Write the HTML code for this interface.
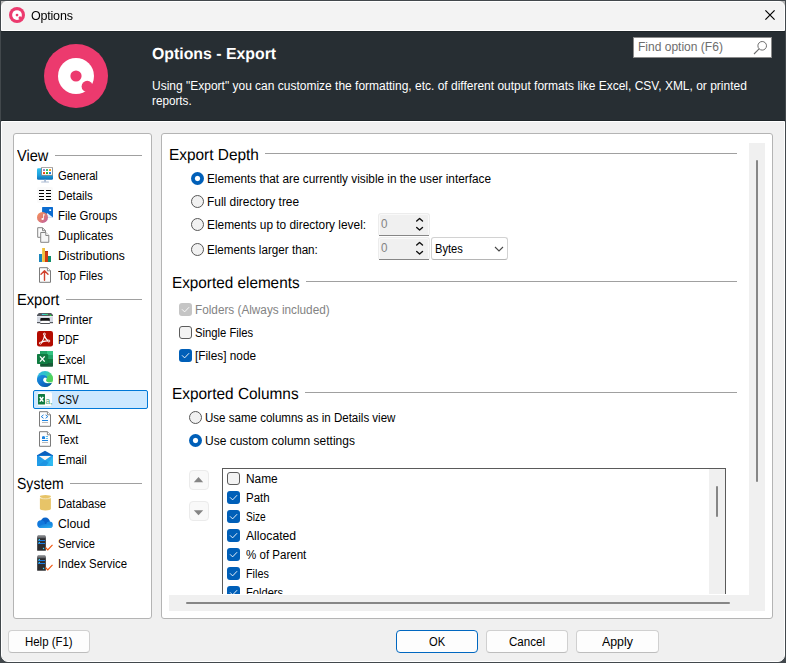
<!DOCTYPE html>
<html lang="en">
<head>
<meta charset="utf-8">
<title>Options</title>
<style>
*{box-sizing:border-box;margin:0;padding:0}
html,body{width:786px;height:663px;overflow:hidden;background:#42484c}
body{font-family:"Liberation Sans",sans-serif;font-size:12px;color:#000;position:relative}
.abs,.t,.h,.hb,.ln,.ic,.rad,.cb,.btn,.spin,.track,.thumb,.panel,.arr{position:absolute}
.crn{position:absolute;top:1px;width:6px;height:6px;background:#b4b4b4}
#titlebar{position:absolute;left:1px;top:1px;width:784px;height:30px;background:#f3f3f3;border:1px solid #fff;border-radius:6px 6px 0 0}
#header{position:absolute;left:1px;top:31px;width:784px;height:90px;background:#272e33;box-shadow:inset 0 1px 0 0 #1e2529,inset 0 -1px 0 0 #1e2529}
#main{position:absolute;left:1px;top:121px;width:784px;height:541px;background:#f0f0f0;border:1px solid #fff;border-radius:0 0 7px 7px}
.panel{background:#fff;border:1px solid #b4b4b4;border-radius:3px}
.t{white-space:pre;line-height:16px;height:16px;font-size:12.5px;transform-origin:0 0}
.h{white-space:pre;line-height:20px;height:20px;font-size:16px;transform-origin:0 0;text-rendering:geometricPrecision}
.hb{white-space:pre;line-height:22px;height:22px;font-size:16px;font-weight:bold;color:#fff;transform-origin:0 0;text-rendering:geometricPrecision}
.w{color:#fff}
.g{color:#838383}
.f{color:#6d6d6d}
.ln{height:1px;background:#a0a0a0}
.rad{width:13px;height:13px;border-radius:50%;border:1px solid #575757;background:#f1f1f1}
.rad.on{border:none;background:radial-gradient(circle at 50% 50%,#fff 0,#fff 2.1px,#005fb8 3.1px)}
.cb{width:13px;height:13px;border-radius:3px;border:1px solid #5c5c5c;background:#f3f3f3}
.cb.on{border:none;background:#005fb8}
.cb.dis{border:none;background:#c5c5c5}
.cb svg{position:absolute;left:0;top:0}
.btn{height:23px;width:82px;border:1px solid #d0d0d0;border-bottom-color:#bdbdbd;border-radius:4px;background:#fdfdfd}
.spin{width:52px;height:23px;background:#f0f0f0;border:1px solid #ececec;border-bottom:none;border-radius:3px;box-shadow:inset 0 1px 0 0 #f9f9f9,inset 1px 0 0 0 #f9f9f9,inset -1px 0 0 0 #f9f9f9}
.spin:after{content:"";position:absolute;left:0;right:0;bottom:0;height:1px;background:#868686}
.track{background:#f0f0f0}
.thumb{background:#868686;border-radius:1px}
.arr{width:20px;height:20px;background:#f9f9f9;border:1px solid #ebebeb;border-radius:4px}
</style>
</head>
<body>
<div class="crn" style="left:1px"></div><div class="crn" style="left:779px"></div>
<div id="titlebar"></div><div id="header"></div><div id="main"></div>
<!-- title bar -->
<svg class="ic" style="left:9px;top:7px" width="16" height="16" viewBox="0 0 64 64"><circle cx="32" cy="32" r="32" fill="#ec3a6e"/><circle cx="32" cy="32" r="19.5" fill="#fff"/><circle cx="32" cy="32" r="5.5" fill="#ec3a6e"/><circle cx="44" cy="43" r="6" fill="#ec3a6e"/><path d="M43 42L54 45L47 54Z" fill="#ec3a6e"/></svg>
<div class="t" style="left:31px;top:8px;font-size:12.5px;letter-spacing:-0.2px;color:#000;will-change:opacity">Options</div>
<svg class="ic" style="left:765px;top:10px" width="10" height="10" viewBox="0 0 10 10"><path d="M.4 .4L9.6 9.6M9.6 .4L.4 9.6" stroke="#000" stroke-width="1.2" fill="none"/></svg>
<!-- header -->
<svg class="ic" style="left:44px;top:44px" width="64" height="64" viewBox="0 0 64 64"><circle cx="32" cy="32" r="32" fill="#ec3a6e"/><circle cx="32" cy="32" r="18" fill="#fff"/><circle cx="32" cy="32" r="5.6" fill="#ec3a6e"/><circle cx="43.2" cy="42.4" r="5.6" fill="#ec3a6e"/><path d="M43 42 L52 44 L46 52 Z" fill="#ec3a6e"/></svg>
<div class="hb" style="left:152px;top:44px;transform:scaleX(0.99)">Options - Export</div>
<div class="t w" style="left:152px;top:78px;transform:scaleX(0.959)">Using "Export" you can customize the formatting, etc. of different output formats like Excel, CSV, XML, or printed</div>
<div class="t w" style="left:152px;top:93px;transform:scaleX(0.937)">reports.</div>
<div class="abs" style="left:633px;top:37px;width:139px;height:21px;background:#fff;border:1px solid #8a8a8a"></div>
<div class="t f" style="left:638px;top:39px;transform:scaleX(0.962)">Find option (F6)</div>
<svg class="ic" style="left:753px;top:40px" width="15" height="15" viewBox="0 0 15 15"><circle cx="9.2" cy="5.8" r="4.3" fill="none" stroke="#6d6d6d" stroke-width="1"/><path d="M6.1 8.9L1 14" stroke="#6d6d6d" stroke-width="1.1" fill="none"/></svg>
<!-- panels -->
<div class="panel" style="left:13px;top:133px;width:139px;height:486px"></div>
<div class="panel" style="left:161px;top:133px;width:612px;height:486px"></div>
<!-- tree -->
<div class="h" style="left:17px;top:147px;transform:scaleX(0.91)">View</div>
<div class="ln" style="left:55px;top:155px;width:87px"></div>
<svg class="ic" style="left:37px;top:167px" width="16" height="16" viewBox="0 0 16 16"><defs><linearGradient id="gm" x1="0" y1="0" x2="0" y2="1"><stop offset="0" stop-color="#30c2f0"/><stop offset=".6" stop-color="#1ea0dc"/><stop offset="1" stop-color="#0d6fb8"/></linearGradient></defs>
<rect x="0" y="1.2" width="16" height="11.6" rx="1.3" fill="url(#gm)"/>
<rect x="7.1" y="12.8" width="1.9" height="2" fill="#a9b9d2"/><rect x="4.1" y="14.5" width="7.9" height="1" rx=".5" fill="#a9b9d2"/>
<rect x="4.5" y=".3" width="11.1" height="8" rx=".5" fill="#fff" stroke="#7d7877" stroke-width=".8"/>
<rect x="6" y="2.1" width="2" height="1.9" fill="#8f7fc9"/><rect x="9" y="2.1" width="2" height="1.9" fill="#2dc07b"/><rect x="12" y="2.1" width="2" height="1.9" fill="#f7930f"/>
<rect x="6" y="5.1" width="2" height="1.9" fill="#f2480b"/><rect x="9" y="5.1" width="2" height="1.9" fill="#2bae23"/><rect x="12" y="5.1" width="2" height="1.9" fill="#0f79e2"/></svg>
<div class="t" style="left:58px;top:168px;transform:scaleX(0.896)">General</div>
<svg class="ic" style="left:37px;top:187px" width="16" height="16" viewBox="0 0 16 16"><rect x="0" y="0" width="16" height="16" rx="2" fill="#fafafa"/>
<path d="M2 3.5h5M9 3.5h5M2 6.5h5M9 6.5h5M2 9.5h5M9 9.5h5M2 12.5h5M9 12.5h5" stroke="#000" stroke-width="1" fill="none"/></svg>
<div class="t" style="left:58px;top:188px;transform:scaleX(0.911)">Details</div>
<svg class="ic" style="left:37px;top:207px" width="16" height="16" viewBox="0 0 16 16"><defs><linearGradient id="gf" x1="0" y1="0" x2="1" y2="1"><stop offset="0" stop-color="#f6935a"/><stop offset=".5" stop-color="#e07c72"/><stop offset="1" stop-color="#b85aa8"/></linearGradient></defs>
<path d="M5.1 .9a1 1 0 0 1 1-1h8.9a1 1 0 0 1 1 1v9.5h-10.9z" fill="#0b6cd0"/>
<path d="M10.3 5.9l5.7 4.5v.3h-8.5z" fill="#eaf3fc"/>
<rect x="12.3" y="2.3" width="1.8" height="1.7" fill="#fff"/>
<circle cx="5.5" cy="10.4" r="5.5" fill="url(#gf)"/>
<path d="M6.5 7.3v4.5M6.5 7.3l1.5 .9" stroke="#fff" stroke-width=".8" fill="none"/><ellipse cx="5.6" cy="12" rx="1.2" ry=".9" fill="#fff"/></svg>
<div class="t" style="left:58px;top:208px;transform:scaleX(0.915)">File Groups</div>
<svg class="ic" style="left:37px;top:227px" width="16" height="16" viewBox="0 0 16 16"><path d="M.7 .7h4.8l3 3v6.6h-7.8z" fill="#fbfbfb" stroke="#858585" stroke-width="1"/><path d="M5.5 .7v3h3" fill="none" stroke="#858585" stroke-width="1"/>
<path d="M3.7 5.5h5.1l3 3v6.8h-8.1z" fill="#f6f6f6" stroke="#858585" stroke-width="1"/><path d="M8.8 5.5v3h3" fill="#fff" stroke="#858585" stroke-width="1"/></svg>
<div class="t" style="left:58px;top:228px;transform:scaleX(0.947)">Duplicates</div>
<svg class="ic" style="left:37px;top:247px" width="16" height="16" viewBox="0 0 16 16"><rect x="2" y="7" width="3" height="8" fill="#1a86bd"/><rect x="5" y="1" width="3" height="14" fill="#efbf3f"/><rect x="8" y="4" width="3" height="11" fill="#cf3a12"/><rect x="11" y="9" width="3" height="6" fill="#0f8f6b"/>
<rect x="5" y="1" width="1" height="14" fill="#f5d060" opacity=".7"/><rect x="8" y="4" width="3" height="1" fill="#a82e10"/></svg>
<div class="t" style="left:58px;top:248px;transform:scaleX(0.972)">Distributions</div>
<svg class="ic" style="left:37px;top:267px" width="16" height="16" viewBox="0 0 16 16"><path d="M2.5 .7h7.9l3.1 3.1v11.5h-11z" fill="#fdfdfd" stroke="#7b7b7b" stroke-width="1"/><path d="M10.4 .7v3.1h3.1" fill="#fff" stroke="#7b7b7b" stroke-width=".9"/><path d="M7.5 13.2v-9M4 7.3l3.5-3.5l3.5 3.5" stroke="#d0402c" stroke-width="1.4" fill="none" stroke-linecap="round" stroke-linejoin="round"/></svg>
<div class="t" style="left:58px;top:268px;transform:scaleX(0.899)">Top Files</div>
<div class="h" style="left:17px;top:291px;transform:scaleX(0.916)">Export</div>
<div class="ln" style="left:66px;top:299px;width:76px"></div>
<svg class="ic" style="left:37px;top:308px" width="16" height="16" viewBox="0 0 16 16"><defs><linearGradient id="gp" x1="0" y1="0" x2="1" y2="0"><stop offset="0" stop-color="#45c3f5"/><stop offset=".5" stop-color="#36d3b0"/><stop offset="1" stop-color="#3fd75f"/></linearGradient></defs>
<path d="M1.9 4.9h12.2l1.9 2v1.2h-16v-1.2z" fill="#54575e"/>
<rect x="4.9" y="5.9" width="6.1" height="1.1" fill="url(#gp)"/><rect x="12.7" y="6.8" width="1.6" height="1.5" fill="#1fe83a"/>
<rect x="0" y="7.9" width="16" height="7.2" rx=".4" fill="#d5dae3"/>
<rect x="0" y="8" width="16" height=".8" fill="#e9edf3"/>
<rect x="3.3" y="9.9" width="9.5" height="3.4" rx="1" fill="#121315"/>
<path d="M4.4 12.8h7.4l.9 2.5h-9.2z" fill="#fff"/>
<rect x="0" y="14.1" width="3.1" height="1.1" fill="#4b4e54"/><rect x="12.9" y="14.1" width="3.1" height="1.1" fill="#4b4e54"/>
<rect x="3.2" y="15.1" width="9.7" height=".9" fill="#3c3f44"/></svg>
<div class="t" style="left:58px;top:312px;transform:scaleX(0.936)">Printer</div>
<svg class="ic" style="left:37px;top:331px" width="16" height="16" viewBox="0 0 16 16"><rect x="0" y="0" width="16" height="15.4" rx="2.2" fill="#b30b00"/>
<g fill="none" stroke="#fff" stroke-width="1.1" stroke-linecap="round" stroke-linejoin="round"><path d="M7.4 3.1c.3 3.2-1.4 6.6-3.9 9M7.4 3.1c.2 3 1.8 5.6 4.3 6.9M3.5 12.1c2.4-1.8 5.4-2.5 8.2-2.1"/></g>
<circle cx="7.4" cy="3.1" r="1" fill="#b30b00" stroke="#fff" stroke-width=".9"/><circle cx="3.4" cy="12.2" r="1" fill="#b30b00" stroke="#fff" stroke-width=".9"/><circle cx="11.8" cy="10" r="1" fill="#b30b00" stroke="#fff" stroke-width=".9"/></svg>
<div class="t" style="left:58px;top:332px;transform:scaleX(0.835)">PDF</div>
<svg class="ic" style="left:37px;top:351px" width="16" height="16" viewBox="0 0 16 16"><rect x="3.1" y="0" width="12.9" height="15.8" rx=".8" fill="#185c37"/>
<rect x="3.1" y="0" width="6.8" height="4" fill="#21a366"/><rect x="9.9" y="0" width="6.1" height="4" fill="#33c481"/>
<rect x="3.1" y="4" width="6.8" height="4" fill="#107c41"/><rect x="9.9" y="4" width="6.1" height="4" fill="#21a366"/>
<rect x="3.1" y="8" width="6.8" height="4" fill="#0e6a38"/><rect x="9.9" y="8" width="6.1" height="4" fill="#107c41"/>
<rect x="4.2" y="3.6" width="7" height="10.6" fill="#0a4a2a" opacity=".45"/>
<rect x="0" y="3" width="10.9" height="10" rx=".7" fill="#107c41"/>
<path d="M3 5.4l4.7 5.2M7.7 5.4l-4.7 5.2" stroke="#fff" stroke-width="1.4" fill="none"/></svg>
<div class="t" style="left:58px;top:352px;transform:scaleX(0.887)">Excel</div>
<svg class="ic" style="left:37px;top:371px" width="16" height="16" viewBox="0 0 16 16"><defs><linearGradient id="ge1" x1="0" y1="0" x2="1" y2=".35"><stop offset="0" stop-color="#2fb0ea"/><stop offset=".55" stop-color="#2ec6c4"/><stop offset="1" stop-color="#5cda58"/></linearGradient>
<linearGradient id="ge2" x1="0" y1="0" x2="1" y2="1"><stop offset="0" stop-color="#1d95e4"/><stop offset=".55" stop-color="#0f6cc8"/><stop offset="1" stop-color="#0b479c"/></linearGradient></defs>
<circle cx="8" cy="8" r="8" fill="url(#ge1)"/>
<path d="M0 8.5C.2 5.6 3 3.9 5.8 3.9C8.6 3.9 10.3 5.4 10.6 7.3C9.6 6.5 8.2 6.3 7.2 6.9C5.9 7.7 5.8 9.5 6.8 10.8C8.2 12.6 11.5 12.9 14.9 11.7C13.9 14.2 11.2 16 8 16C3.6 16 0 12.4 0 8.5Z" fill="url(#ge2)"/>
<path d="M7.2 6.9C6 7.7 5.9 9.4 6.9 10.6C8.3 12.3 11.5 12.5 14.9 11.5C15.1 11.2 15.2 10.9 15.3 10.6C13.2 11.5 10.6 11.3 9.6 10.2C9 9.4 9.2 8.5 9.9 7.9C9.3 7 8.2 6.3 7.2 6.9Z" fill="#fff"/>
<path d="M9.9 7.9C9.2 8.5 9 9.4 9.6 10.2C10.6 11.3 13.2 11.5 15.3 10.6C15.8 9.6 16 8.9 16 8C16 6.6 15.6 5.4 15 4.4C13 3.9 11.2 4.6 10 5.8C10.6 6.5 10.5 7.3 9.9 7.9Z" fill="#4fd25e"/></svg>
<div class="t" style="left:58px;top:372px;transform:scaleX(0.915)">HTML</div>
<div class="abs" style="left:33px;top:390px;width:115px;height:19px;background:#cce8ff;border:1px solid #0078d7;border-radius:2px"></div>
<svg class="ic" style="left:37px;top:391px" width="16" height="16" viewBox="0 0 16 16"><rect x=".8" y="1.2" width="14.2" height="13.9" rx="1.5" fill="#fdfdfd"/>
<rect x="1" y="3" width="7" height="10.6" rx=".5" fill="#107c41"/>
<path d="M2.8 6l3.5 4.6M6.3 6l-3.5 4.6" stroke="#fff" stroke-width="1.5" fill="none"/>
<text x="8.6" y="13.3" font-family="Liberation Sans, sans-serif" font-size="8.5" fill="#4fa878">a,</text></svg>
<div class="t" style="left:58px;top:392px;transform:scaleX(0.808)">CSV</div>
<svg class="ic" style="left:37px;top:411px" width="16" height="16" viewBox="0 0 16 16"><path d="M2.5 .7h7.9l3.1 3.1v11.5h-11z" fill="#fdfdfd" stroke="#7b7b7b" stroke-width="1"/><path d="M10.4 .7v3.1h3.1" fill="#fff" stroke="#7b7b7b" stroke-width=".9"/><path d="M6.5 3.9l-2.2 1.7l2.2 1.7M8.6 3.9l2.2 1.7l-2.2 1.7" stroke="#1d83e0" stroke-width="1" fill="none"/>
<rect x="5" y="9" width="6" height="1" fill="#1d83e0"/><rect x="5" y="11.2" width="6" height=".8" fill="#a8a8a8"/></svg>
<div class="t" style="left:58px;top:412px;transform:scaleX(0.915)">XML</div>
<svg class="ic" style="left:37px;top:431px" width="16" height="16" viewBox="0 0 16 16"><path d="M2.5 .7h7.9l3.1 3.1v11.5h-11z" fill="#fdfdfd" stroke="#7b7b7b" stroke-width="1"/><path d="M10.4 .7v3.1h3.1" fill="#fff" stroke="#7b7b7b" stroke-width=".9"/><rect x="5" y="5.5" width="3" height="2.5" fill="#1d83e0"/><path d="M5 6.5l1.5-1.5l1.5 1.5z" fill="#1d83e0"/><rect x="8.8" y="5" width="2.2" height=".8" fill="#39b4f0"/><rect x="8.8" y="7" width="2.2" height=".8" fill="#39b4f0"/>
<rect x="5" y="9" width="6" height="1" fill="#1d83e0"/><rect x="5" y="11.2" width="6" height=".8" fill="#a8a8a8"/></svg>
<div class="t" style="left:58px;top:432px;transform:scaleX(0.885)">Text</div>
<svg class="ic" style="left:37px;top:450px" width="16" height="16" viewBox="0 0 16 16"><defs><linearGradient id="gem" x1="0" y1="0" x2="1" y2="1"><stop offset="0" stop-color="#1b8ee4"/><stop offset="1" stop-color="#2bb7f0"/></linearGradient></defs>
<path d="M0 5.3l8-4.6l8 4.6v1h-16z" fill="#0a5fbe"/>
<rect x="0" y="5.3" width="16" height="10.7" rx=".6" fill="url(#gem)"/>
<path d="M0 5.3h16v.4h-16z" fill="#0a5fbe"/>
<path d="M2 6h12l-6 4.2z" fill="#fdf6f2"/>
<path d="M0 16l8-5.8l8 5.8z" fill="#1a86dc" opacity=".55"/>
<path d="M16 6.5v9.5h-7z" fill="#3ccaf6" opacity=".5"/></svg>
<div class="t" style="left:58px;top:452px;transform:scaleX(0.919)">Email</div>
<div class="h" style="left:17px;top:475px;transform:scaleX(0.877)">System</div>
<div class="ln" style="left:70px;top:483px;width:72px"></div>
<svg class="ic" style="left:37px;top:495px" width="16" height="16" viewBox="0 0 16 16"><path d="M2.9 3v10.8c0 .9 2.4 1.6 5.5 1.6s5.5-.7 5.5-1.6v-10.8z" fill="#e7c468"/>
<ellipse cx="8.4" cy="1.5" rx="5.5" ry="1.5" fill="#e7c468"/><path d="M2.9 2.7c1 .8 3 1.1 5.5 1.1s4.5-.3 5.5-1.1" fill="none" stroke="#fbf3dc" stroke-width=".7"/></svg>
<div class="t" style="left:58px;top:496px;transform:scaleX(0.898)">Database</div>
<svg class="ic" style="left:37px;top:515px" width="16" height="16" viewBox="0 0 16 16"><defs><linearGradient id="gc" x1="0" y1="0" x2="1" y2="1"><stop offset="0" stop-color="#1279dc"/><stop offset="1" stop-color="#2db0ee"/></linearGradient></defs>
<circle cx="8.3" cy="7.3" r="4.7" fill="#0a63c9"/>
<circle cx="12.5" cy="9.7" r="3.3" fill="#1789e2"/>
<circle cx="4.1" cy="9.1" r="3.9" fill="#1078dc"/>
<path d="M1.5 12c2.5-2.5 6-3.5 9.5-2.8c2 .4 3.8 1.5 4.6 2.3c-.5 .9-1.4 1.5-2.6 1.5h-9c-1 0-1.9-.4-2.5-1z" fill="url(#gc)"/></svg>
<div class="t" style="left:58px;top:516px;transform:scaleX(0.978)">Cloud</div>
<svg class="ic" style="left:37px;top:535px" width="16" height="16" viewBox="0 0 16 16"><path d="M1 .2h7l1 1.3v1.8h-9v-1.8z" fill="#7b7d81"/>
<rect x="0" y="2.6" width="9" height="13.2" rx=".5" fill="#56575a"/>
<rect x=".8" y="3.3" width="7.4" height="12" fill="#2c2c2f"/>
<rect x="1" y="5" width="7" height=".9" fill="#1a86f5"/><rect x="1" y="8" width="7" height=".9" fill="#1a86f5"/>
<rect x="1.7" y="3.9" width="1.2" height="1.2" fill="#49d8f5"/><rect x="1.7" y="6.9" width="1.2" height="1.2" fill="#49d8f5"/>
<rect x="5.9" y="12.8" width="1.3" height="1.3" fill="#49d8f5"/>
<path d="M8.5 12.5l2.3 2.3l4.7-4.9" stroke="#f0560e" stroke-width="1.2" fill="none"/></svg>
<div class="t" style="left:58px;top:536px;transform:scaleX(0.888)">Service</div>
<svg class="ic" style="left:37px;top:555px" width="16" height="16" viewBox="0 0 16 16"><path d="M1 .2h7l1 1.3v1.8h-9v-1.8z" fill="#7b7d81"/>
<rect x="0" y="2.6" width="9" height="13.2" rx=".5" fill="#56575a"/>
<rect x=".8" y="3.3" width="7.4" height="12" fill="#2c2c2f"/>
<rect x="1" y="5" width="7" height=".9" fill="#1a86f5"/><rect x="1" y="8" width="7" height=".9" fill="#1a86f5"/>
<rect x="1.7" y="3.9" width="1.2" height="1.2" fill="#49d8f5"/><rect x="1.7" y="6.9" width="1.2" height="1.2" fill="#49d8f5"/>
<rect x="5.9" y="12.8" width="1.3" height="1.3" fill="#49d8f5"/>
<path d="M8.5 12.5l2.3 2.3l4.7-4.9" stroke="#f0560e" stroke-width="1.2" fill="none"/></svg>
<div class="t" style="left:58px;top:556px;transform:scaleX(0.913)">Index Service</div>
<!-- export depth -->
<div class="h" style="left:169px;top:146px;transform:scaleX(0.963)">Export Depth</div>
<div class="ln" style="left:265px;top:153px;width:472px"></div>
<div class="rad on" style="left:191px;top:172px"></div>
<div class="t" style="left:207px;top:171px;transform:scaleX(0.944)">Elements that are currently visible in the user interface</div>
<div class="rad" style="left:191px;top:195px"></div>
<div class="t" style="left:207px;top:194px;transform:scaleX(0.954)">Full directory tree</div>
<div class="rad" style="left:191px;top:218px"></div>
<div class="t" style="left:207px;top:217px;transform:scaleX(0.95)">Elements up to directory level:</div>
<div class="rad" style="left:191px;top:243px"></div>
<div class="t" style="left:207px;top:242px;transform:scaleX(0.933)">Elements larger than:</div>
<div class="spin" style="left:378px;top:213px"></div>
<div class="t g" style="left:381px;top:216px;transform:scaleX(0.93)">0</div>
<svg class="ic" style="left:415px;top:217.3px" width="9" height="14" viewBox="0 0 9 14"><path d="M1.7 4L4.6 1.5L7.5 4M1.7 10.5L4.6 13L7.5 10.5" stroke="#111" stroke-width="1.4" fill="none" stroke-linecap="round" stroke-linejoin="round"/></svg>
<div class="spin" style="left:378px;top:237px"></div>
<div class="t g" style="left:381px;top:240px;transform:scaleX(0.93)">0</div>
<svg class="ic" style="left:415px;top:241.3px" width="9" height="14" viewBox="0 0 9 14"><path d="M1.7 4L4.6 1.5L7.5 4M1.7 10.5L4.6 13L7.5 10.5" stroke="#111" stroke-width="1.4" fill="none" stroke-linecap="round" stroke-linejoin="round"/></svg>
<div class="abs" style="left:431px;top:237px;width:77px;height:23px;background:#fff;border:1px solid #d2d2d2;border-bottom-color:#b5b5b5;border-radius:3px"></div>
<div class="t" style="left:435px;top:241px;transform:scaleX(0.89)">Bytes</div>
<svg class="ic" style="left:494px;top:246px" width="10" height="6" viewBox="0 0 10 6"><path d="M1 1L5 5L9 1" stroke="#474747" stroke-width="1.1" fill="none"/></svg>
<!-- exported elements -->
<div class="h" style="left:172px;top:274px;transform:scaleX(0.956)">Exported elements</div>
<div class="ln" style="left:306px;top:281px;width:431px"></div>
<div class="cb dis" style="left:179px;top:303px"><svg width="13" height="13" viewBox="0 0 13 13"><path d="M3.3 6.6l2.3 2.3l4.2-4.4" stroke="#fff" stroke-width=".9" fill="none" stroke-linecap="round" stroke-linejoin="round"/></svg></div>
<div class="t g" style="left:195px;top:302px;transform:scaleX(0.941)">Folders (Always included)</div>
<div class="cb" style="left:179px;top:326px"></div>
<div class="t" style="left:195px;top:325px;transform:scaleX(0.9)">Single Files</div>
<div class="cb on" style="left:179px;top:349px"><svg width="13" height="13" viewBox="0 0 13 13"><path d="M3.3 6.6l2.3 2.3l4.2-4.4" stroke="#fff" stroke-width=".9" fill="none" stroke-linecap="round" stroke-linejoin="round"/></svg></div>
<div class="t" style="left:195px;top:348px;transform:scaleX(0.945)">[Files] node</div>
<!-- exported columns -->
<div class="h" style="left:172px;top:385px;transform:scaleX(0.962)">Exported Columns</div>
<div class="ln" style="left:305px;top:392px;width:432px"></div>
<div class="rad" style="left:189px;top:411px"></div>
<div class="t" style="left:205px;top:410px;transform:scaleX(0.923)">Use same columns as in Details view</div>
<div class="rad on" style="left:189px;top:434px"></div>
<div class="t" style="left:205px;top:433px;transform:scaleX(0.959)">Use custom column settings</div>
<div class="arr" style="left:189px;top:470px"></div><svg class="ic" style="left:193px;top:476px" width="11" height="7" viewBox="0 0 11 7"><path d="M.8 6.2L5.5 1.1L10.2 6.2z" fill="#858585"/></svg>
<div class="arr" style="left:189px;top:501px"></div><svg class="ic" style="left:193px;top:509px" width="11" height="7" viewBox="0 0 11 7"><path d="M.8 1.2L5.5 6.3L10.2 1.2z" fill="#858585"/></svg>
<!-- listbox -->
<div class="abs" style="left:222px;top:468px;width:504px;height:126px;overflow:hidden">
<div class="abs" style="left:0;top:0;width:504px;height:160px;border:1px solid #5a5a5a;background:#fff"></div>
<div class="track" style="left:487px;top:1px;width:16px;height:130px"></div>
<div class="thumb" style="left:494px;top:18px;width:2px;height:31px"></div>
<div class="cb" style="left:5px;top:4px"></div>
<div class="t" style="left:24px;top:3px;transform:scaleX(0.951)">Name</div>
<div class="cb on" style="left:5px;top:23px"><svg width="13" height="13" viewBox="0 0 13 13"><path d="M3.3 6.6l2.3 2.3l4.2-4.4" stroke="#fff" stroke-width=".9" fill="none" stroke-linecap="round" stroke-linejoin="round"/></svg></div>
<div class="t" style="left:24px;top:22px;transform:scaleX(0.921)">Path</div>
<div class="cb on" style="left:5px;top:42px"><svg width="13" height="13" viewBox="0 0 13 13"><path d="M3.3 6.6l2.3 2.3l4.2-4.4" stroke="#fff" stroke-width=".9" fill="none" stroke-linecap="round" stroke-linejoin="round"/></svg></div>
<div class="t" style="left:24px;top:41px;transform:scaleX(0.813)">Size</div>
<div class="cb on" style="left:5px;top:61px"><svg width="13" height="13" viewBox="0 0 13 13"><path d="M3.3 6.6l2.3 2.3l4.2-4.4" stroke="#fff" stroke-width=".9" fill="none" stroke-linecap="round" stroke-linejoin="round"/></svg></div>
<div class="t" style="left:24px;top:60px;transform:scaleX(0.974)">Allocated</div>
<div class="cb on" style="left:5px;top:80px"><svg width="13" height="13" viewBox="0 0 13 13"><path d="M3.3 6.6l2.3 2.3l4.2-4.4" stroke="#fff" stroke-width=".9" fill="none" stroke-linecap="round" stroke-linejoin="round"/></svg></div>
<div class="t" style="left:24px;top:79px;transform:scaleX(0.923)">% of Parent</div>
<div class="cb on" style="left:5px;top:99px"><svg width="13" height="13" viewBox="0 0 13 13"><path d="M3.3 6.6l2.3 2.3l4.2-4.4" stroke="#fff" stroke-width=".9" fill="none" stroke-linecap="round" stroke-linejoin="round"/></svg></div>
<div class="t" style="left:24px;top:98px;transform:scaleX(0.865)">Files</div>
<div class="cb on" style="left:5px;top:118px"><svg width="13" height="13" viewBox="0 0 13 13"><path d="M3.3 6.6l2.3 2.3l4.2-4.4" stroke="#fff" stroke-width=".9" fill="none" stroke-linecap="round" stroke-linejoin="round"/></svg></div>
<div class="t" style="left:24px;top:117px;transform:scaleX(0.891)">Folders</div>
</div>
<!-- scrollbars -->
<div class="track" style="left:749px;top:143px;width:16px;height:468px"></div>
<div class="thumb" style="left:756px;top:160px;width:2px;height:322px"></div>
<div class="track" style="left:169px;top:595px;width:596px;height:16px"></div>
<div class="thumb" style="left:186px;top:602px;width:544px;height:2px"></div>
<!-- buttons -->
<div class="btn" style="left:8px;top:630px"></div>
<div class="t" style="left:25px;top:634px;transform:scaleX(0.914)">Help (F1)</div>
<div class="btn" style="left:396px;top:630px;border-color:#0067c0"></div>
<div class="t" style="left:429px;top:634px;transform:scaleX(0.895)">OK</div>
<div class="btn" style="left:486px;top:630px"></div>
<div class="t" style="left:509px;top:634px;transform:scaleX(0.927)">Cancel</div>
<div class="btn" style="left:576px;top:630px;width:83px"></div>
<div class="t" style="left:602px;top:634px;transform:scaleX(0.988)">Apply</div>
</body>
</html>
